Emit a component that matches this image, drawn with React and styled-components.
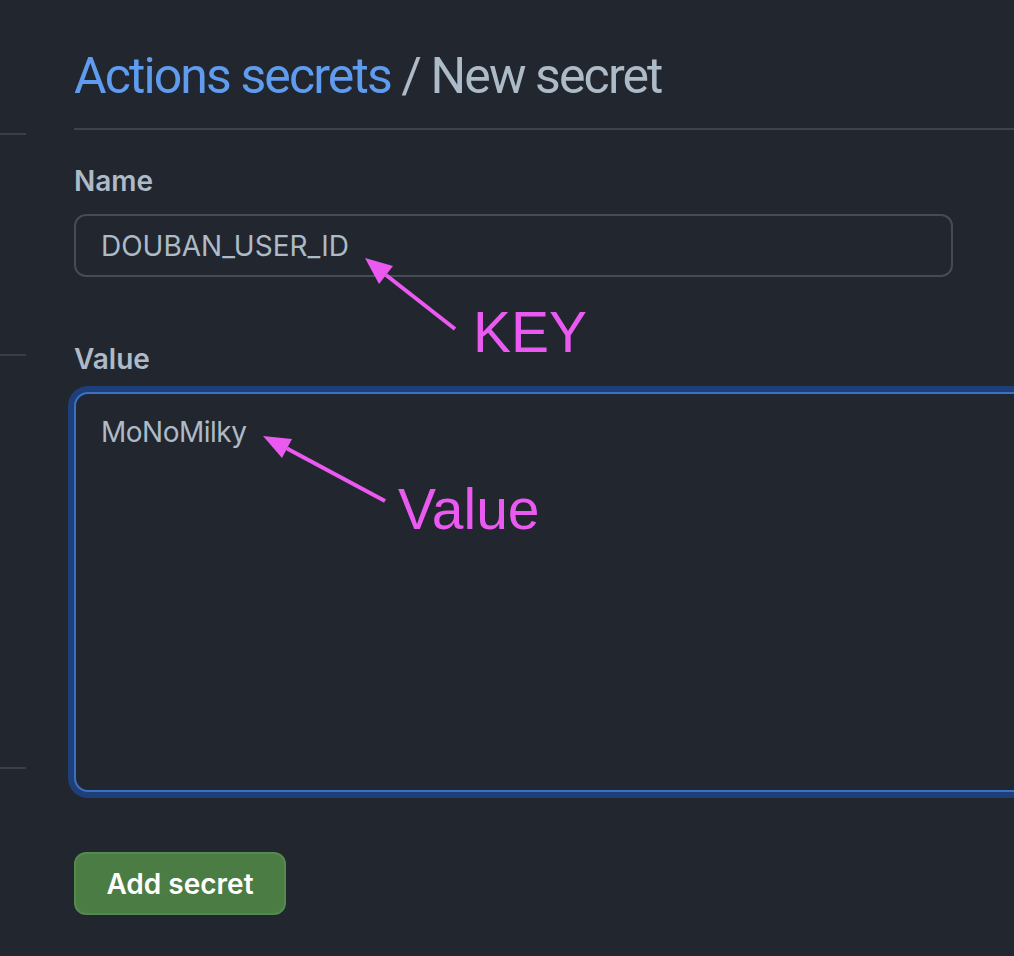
import React from 'react';
import styled, { createGlobalStyle } from 'styled-components';

const GlobalStyle = createGlobalStyle`
  html, body {
    margin: 0;
    padding: 0;
    background: #22262e;
    overflow: hidden;
  }
  body {
    font-family: Inter, 'Noto Sans', sans-serif;
  }
`;

const Page = styled.div`
  position: relative;
  display: flex;
  gap: 48px;
  width: 1200px;
  height: 956px;
  background: #22262e;
`;

const Sidebar = styled.nav`
  display: flex;
  flex-direction: column;
  width: 26px;
  flex-shrink: 0;
`;

const SidebarGroup = styled.div`
  height: ${(p) => p.h}px;
  border-bottom: 2px solid #3a3f47;
`;

const Main = styled.main`
  flex: 1;
  display: flex;
  flex-direction: column;
`;

const Header = styled.h1`
  margin: 46px 0 0;
  padding-bottom: 22px;
  border-bottom: 2px solid #3d434b;
  font-family: Roboto, Inter, sans-serif;
  font-size: 50px;
  line-height: 60px;
  font-weight: 400;
  letter-spacing: -1.9px;
  color: #adbac7;
`;

const Crumb = styled.span`
  color: #5f9cf0;
`;

const Field = styled.div`
  display: flex;
  flex-direction: column;
  gap: 15px;
  margin-top: ${(p) => p.top}px;
`;

const Label = styled.label`
  font-size: 28px;
  line-height: 36px;
  font-weight: 600;
  color: #adbac7;
`;

const Input = styled.input`
  box-sizing: border-box;
  width: 879px;
  height: 63px;
  padding: 0 23px 0 25px;
  border: 2px solid #444c56;
  border-radius: 12px;
  background: #22262e;
  color: #adbac7;
  font-family: Inter, 'Noto Sans', sans-serif;
  font-size: 28px;
  outline: none;
`;

const TextArea = styled.textarea`
  box-sizing: border-box;
  width: 1100px;
  height: 400px;
  padding: 18px 23px 18px 25px;
  border: 2px solid #3a70c8;
  border-radius: 14px;
  box-shadow: 0 0 0 6px #1e3f78;
  background: #22262e;
  color: #adbac7;
  font-family: Inter, 'Noto Sans', sans-serif;
  font-size: 28px;
  line-height: 40px;
  letter-spacing: -0.5px;
  resize: none;
  outline: none;
`;

const Button = styled.button`
  margin-top: 60px;
  align-self: flex-start;
  box-sizing: border-box;
  width: 212px;
  height: 63px;
  border: 2px solid #558a4e;
  border-radius: 12px;
  background: #4a7c43;
  color: #ffffff;
  font-family: Inter, 'Noto Sans', sans-serif;
  font-size: 28px;
  font-weight: 600;
`;

const Overlay = styled.svg`
  position: absolute;
  inset: 0;
  pointer-events: none;
`;

const Note = styled.span`
  position: absolute;
  top: ${(p) => p.top}px;
  left: ${(p) => p.left}px;
  font-family: 'Liberation Sans', Arial, sans-serif;
  font-size: 57px;
  line-height: 57px;
  color: #ea5af1;
`;

function Arrow({ tail, tip, a, b }) {
  return (
    <g>
      <line x1={tail[0]} y1={tail[1]} x2={(a[0] + b[0]) / 2} y2={(a[1] + b[1]) / 2} stroke="#ea5af1" strokeWidth="4" />
      <polygon points={`${tip[0]},${tip[1]} ${a[0]},${a[1]} ${b[0]},${b[1]}`} fill="#ea5af1" />
    </g>
  );
}

export default function App() {
  return (
    <>
      <GlobalStyle />
      <Page>
        <Sidebar>
          <SidebarGroup h={133} />
          <SidebarGroup h={219} />
          <SidebarGroup h={411} />
        </Sidebar>
        <Main>
          <Header>
            <Crumb>Actions secrets</Crumb> / New secret
          </Header>
          <Field top={33}>
            <Label htmlFor="name">Name</Label>
            <Input id="name" defaultValue="DOUBAN_USER_ID" />
          </Field>
          <Field top={64}>
            <Label htmlFor="value">Value</Label>
            <TextArea id="value" defaultValue="MoNoMilky" />
          </Field>
          <Button>Add secret</Button>
        </Main>
        <Overlay width="1014" height="956">
          <Arrow tail={[455, 329]} tip={[365, 258]} a={[393, 266]} b={[379, 284]} />
          <Arrow tail={[385, 501]} tip={[263, 436]} a={[292, 439]} b={[282, 458]} />
        </Overlay>
        <Note top={304} left={473}>KEY</Note>
        <Note top={481} left={398}>Value</Note>
      </Page>
    </>
  );
}
